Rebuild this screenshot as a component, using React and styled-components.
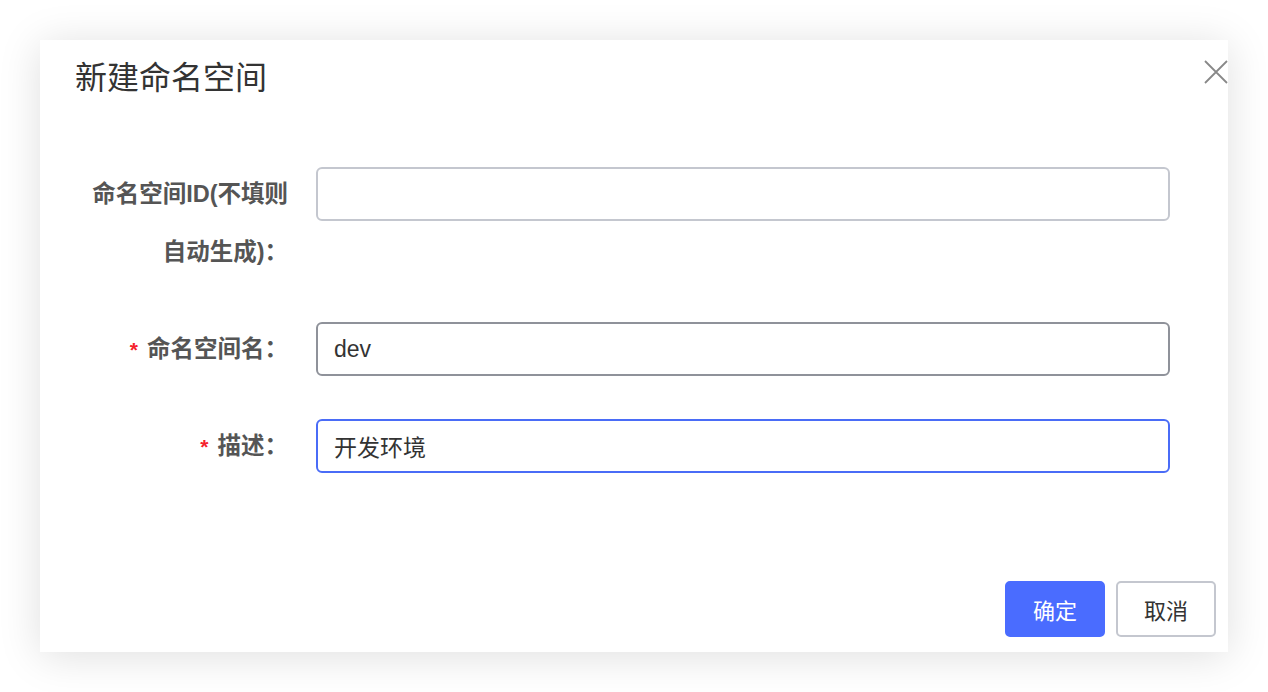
import React from 'react'
import styled, { createGlobalStyle } from 'styled-components'

const GlobalStyle = createGlobalStyle`
    body {
        margin: 0;
        background: #fff;
        font-family: "Liberation Sans", "Noto Sans CJK SC", sans-serif;
    }
`

const Page = styled.div`
    width: 1268px;
    height: 692px;
    box-sizing: border-box;
    padding: 40px;
    overflow: hidden;
`

const Dialog = styled.div`
    position: relative;
    width: 1188px;
    height: 612px;
    box-sizing: border-box;
    background: #fff;
    box-shadow: 0 4px 40px rgba(0, 0, 0, 0.13);
    display: flex;
    flex-direction: column;
`

const Title = styled.h2`
    margin: 0;
    padding: 18px 0 0 35px;
    font-size: 32px;
    line-height: 40px;
    font-weight: 400;
    color: #333;
`

const Close = styled.button`
    position: absolute;
    top: 20px;
    right: 0;
    width: 24px;
    height: 24px;
    padding: 0;
    border: none;
    background: none;
    cursor: pointer;
`

const Form = styled.div`
    display: flex;
    flex-direction: column;
    gap: 39px;
    padding: 67px 58px 0 40px;
`

const Item = styled.div`
    display: flex;
    align-items: flex-start;
`

const Label = styled.label`
    width: 236px;
    height: ${p => (p.$lines || 1) * 58}px;
    overflow: hidden;
    flex-shrink: 0;
    box-sizing: border-box;
    padding-right: 28px;
    text-align: right;
    font-size: 23.5px;
    line-height: 58px;
    font-weight: 700;
    color: #555;
`

const Star = styled.span`
    color: #f5222d;
    margin-right: 9px;
    font-size: 21px;
    line-height: 0;
`

const Input = styled.input`
    flex: 1;
    height: 54px;
    margin-top: 2px;
    box-sizing: border-box;
    padding: 0 16px;
    border: 2px solid ${p => p.$focus ? '#4a6cf7' : p.$hover ? '#8f929a' : '#c4c7cf'};
    border-radius: 6px;
    outline: none;
    font-family: inherit;
    font-size: 23px;
    color: #333;
    background: #fff;
`

const Footer = styled.div`
    margin-top: auto;
    display: flex;
    justify-content: flex-end;
    gap: 11px;
    padding: 0 12px 15px 0;
`

const Button = styled.button`
    width: 100px;
    height: 56px;
    box-sizing: border-box;
    border-radius: 5px;
    font-family: inherit;
    font-size: 22px;
    cursor: pointer;
    border: 2px solid ${p => p.$primary ? '#4a6cff' : '#c4c7cf'};
    background: ${p => p.$primary ? '#4a6cff' : '#fff'};
    color: ${p => p.$primary ? '#fff' : '#333'};
`

export default function App() {
    return (
        <Page>
            <GlobalStyle />
            <Dialog>
                <Title>新建命名空间</Title>
                <Close aria-label="close">
                    <svg width="24" height="24" viewBox="0 0 24 24">
                        <path d="M1 1L23 23M23 1L1 23" stroke="#888" strokeWidth="1.8" fill="none" />
                    </svg>
                </Close>
                <Form>
                    <Item>
                        <Label $lines={2}>命名空间ID(不填则自动生成)：</Label>
                        <Input defaultValue="" />
                    </Item>
                    <Item>
                        <Label><Star>*</Star>命名空间名：</Label>
                        <Input $hover defaultValue="dev" />
                    </Item>
                    <Item>
                        <Label><Star>*</Star>描述：</Label>
                        <Input $focus defaultValue="开发环境" />
                    </Item>
                </Form>
                <Footer>
                    <Button $primary>确定</Button>
                    <Button>取消</Button>
                </Footer>
            </Dialog>
        </Page>
    )
}
